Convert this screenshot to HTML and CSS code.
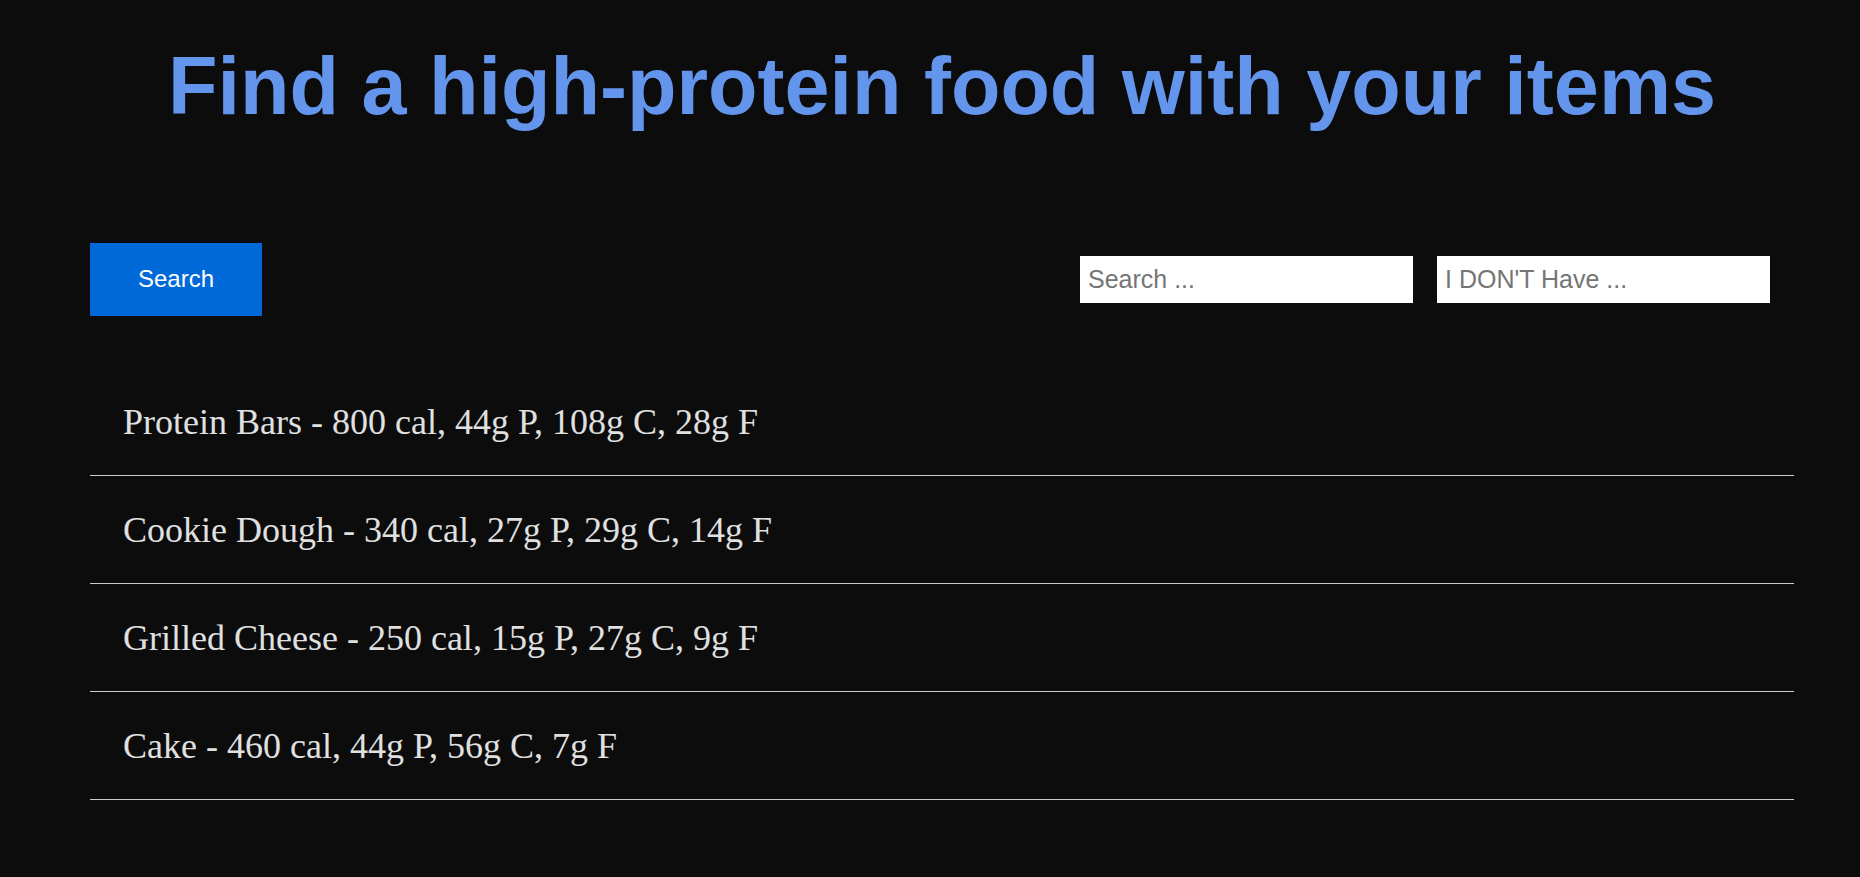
FILE: index.html
```html
<!DOCTYPE html>
<html lang="en">
<head>
<meta charset="utf-8">
<title>High-protein food finder</title>
<link rel="stylesheet" href="styles.css">
</head>
<body>
<main class="page">
  <h1 class="title">Find a high-protein food with your items</h1>
  <div class="toolbar">
    <button class="search-btn" type="button">Search</button>
    <div class="filters">
      <input class="filter-input" type="text" placeholder="Search ...">
      <input class="filter-input" type="text" placeholder="I DON'T Have ...">
    </div>
  </div>
  <ul class="food-list">
    <li class="food-item">Protein Bars - 800 cal, 44g P, 108g C, 28g F</li>
    <li class="food-item">Cookie Dough - 340 cal, 27g P, 29g C, 14g F</li>
    <li class="food-item">Grilled Cheese - 250 cal, 15g P, 27g C, 9g F</li>
    <li class="food-item">Cake - 460 cal, 44g P, 56g C, 7g F</li>
  </ul>
</main>
</body>
</html>
```

FILE: styles.css
```css
html, body {
  margin: 0;
  padding: 0;
  background: #0c0c0c;
}

.page {
  padding: 40px 66px 0 90px;
}

.title {
  margin: 0;
  font-family: "Liberation Sans", Arial, sans-serif;
  font-weight: 700;
  font-size: 81px;
  line-height: 93px;
  color: #6495ed;
  text-align: center;
}

.toolbar {
  margin-top: 110px;
  display: flex;
  align-items: center;
  justify-content: space-between;
}

.search-btn {
  border: none;
  background: #0069d9;
  color: #ffffff;
  font-family: "Liberation Sans", Arial, sans-serif;
  font-size: 24px;
  line-height: 27px;
  padding: 22px 48px 24px;
  margin: 0;
  cursor: pointer;
}

.filters {
  display: flex;
  gap: 24px;
  padding-right: 24px;
}

.filter-input {
  box-sizing: border-box;
  width: 333px;
  height: 47px;
  border: none;
  outline: none;
  margin: 0;
  padding: 0 8px;
  background: #ffffff;
  font-family: "Liberation Sans", Arial, sans-serif;
  font-size: 25px;
  color: #222;
}

.filter-input::placeholder {
  color: #757575;
}

.food-list {
  list-style: none;
  margin: 52px 0 0 0;
  padding: 0;
}

.food-item {
  padding: 34px 33px 32px;
  font-family: "Liberation Serif", "Times New Roman", serif;
  font-size: 36px;
  line-height: 41px;
  color: #e0e0e0;
  border-bottom: 1px solid #cccccc;
}
```
